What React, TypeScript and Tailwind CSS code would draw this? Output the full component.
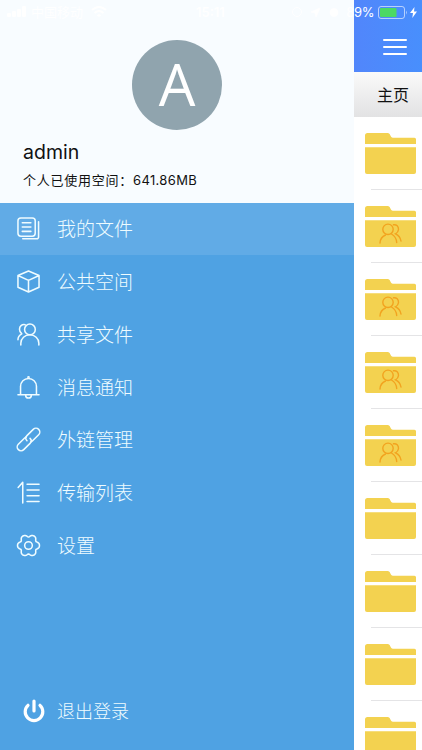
import type { ReactNode } from 'react';

const FONT = "font-['Inter','Noto_Sans_CJK_SC',sans-serif]";

// six soft lobes around the centre of a 24px box
const gearPoints = Array.from({ length: 90 }, (_, i) => {
  const a = (i / 90) * Math.PI * 2;
  const r = 10.4 + 1.3 * Math.cos(6 * a) - 0.25 * Math.cos(12 * a);
  return `${(12 + r * Math.cos(a)).toFixed(2)},${(12 + r * Math.sin(a)).toFixed(2)}`;
}).join(' ');

function MenuIcon({ children }: { children: ReactNode }) {
  return (
    <svg
      className="w-[23px] h-[23px] shrink-0 overflow-visible"
      viewBox="0 0 24 24"
      fill="none"
      stroke="currentColor"
      strokeWidth="1.6"
      strokeLinecap="round"
      strokeLinejoin="round"
    >
      {children}
    </svg>
  );
}

const menu: { label: string; icon: ReactNode }[] = [
  {
    label: '我的文件',
    icon: (
      <>
        <rect x="1" y="1" width="18" height="19" rx="3" />
        <path d="M5.5 6h9M5.5 10.5h9M5.5 15h9M22.5 5v15.5a2 2 0 0 1-2 2.3H6" />
      </>
    ),
  },
  {
    label: '公共空间',
    icon: <path d="M12 1 23 5.8V18L12 23 1 18V5.8ZM1 5.8l11 5 11-5M12 10.8V23" />,
  },
  {
    label: '共享文件',
    icon: (
      <>
        <circle cx="13.5" cy="6.7" r="5.6" />
        <path d="M4 23v-2a9.4 8.7 0 0 1 18.8 0v2M8.5 1.8C5 1 2.6 3.7 2.6 6.500c0 2 .9 3.700 2.300 4.700M5 11.300C2.300 12.700 1 15 1 17.500" />
      </>
    ),
  },
  {
    label: '消息通知',
    icon: (
      <>
        <path d="M1 19.500h22M3.700 19.500v-8.700a8.300 8.300 0 0 1 16.600 0v8.700M9 20c0 4 6 4 6 0" />
        <circle cx="12" cy="1.300" r=".6" />
      </>
    ),
  },
  {
    label: '外链管理',
    icon: (
      <g transform="rotate(-45 12 12)">
        <path d="M14 12.300c0 2.200-1.700 3.700-3.700 3.700H1a4 4 0 0 1 0-8h9.300q1.200 0 2 .5" />
        <path d="M10 11.700C10 9.500 11.700 8 13.700 8H23a4 4 0 0 1 0 8h-9.300q-1.200 0-2-.5" />
      </g>
    ),
  },
  {
    label: '传输列表',
    icon: <path d="M1.200 6.800 6 1.300V23M10.500 3.500H23M10.500 9.500H23M10.500 15.500H23M10.500 21.300H23" />,
  },
  {
    label: '设置',
    icon: (
      <>
        <polygon points={gearPoints} />
        <circle cx="12" cy="12" r="4" />
      </>
    ),
  },
];

const folders = [false, true, true, true, true, false, false, false, false];

function Folder({ shared }: { shared: boolean }) {
  return (
    <svg className="w-[51px] h-[42px] block" viewBox="0 0 51 42" fill="#f3d250">
      <path d="M0 11V2.500A2.500 2.500 0 0 1 2.500 0H22.500C26 0 25 4.800 28 4.800H49A2 2 0 0 1 51 7v4Z" />
      <path d="M0 14.300h51V39a2 2 0 0 1-2 2H2a2 2 0 0 1-2-2Z" />
      {shared && (
        <g fill="none" stroke="#f2a31f" strokeWidth="1.400" strokeLinecap="round">
          <circle cx="23" cy="23.300" r="5.200" />
          <path d="M15 37c.2-3.800 2.500-6.700 5.500-8M26.500 28c3 1.800 5 4.800 5.200 8.500M28.500 18.800c3-.6 5.200 1.800 5 4.700-.2 2-1.300 3.500-3 4.300 3 1.400 5 4 5.500 7.200" />
        </g>
      )}
    </svg>
  );
}

function StatusBar() {
  return (
    <div className="absolute inset-x-0 top-0 h-6 text-white text-[13px] leading-6">
      <div className="absolute left-[7px] top-0 flex items-center">
        <svg className="w-5 h-3" viewBox="0 0 20 12" fill="currentColor">
          <rect y="7" width="4" height="4" rx="1" />
          <rect x="5" y="5" width="4" height="6" rx="1" />
          <rect x="10" y="3" width="4" height="8" rx="1" />
          <rect x="15" width="4" height="11" rx="1" />
        </svg>
        <span className="ml-1">中国移动</span>
        <svg className="ml-2 w-4 h-3" viewBox="0 0 16 12" fill="none" stroke="currentColor" strokeWidth="2">
          <path d="M1 4q7-6 14 0M3.500 7q4.500-4 9 0M6.500 10q1.500-1.500 3 0" />
        </svg>
      </div>
      <span className="absolute left-[196px] top-0 font-semibold">15:11</span>
      <div className="absolute right-[5px] top-0 flex items-center">
        <svg className="w-[52px] h-3 mr-1" viewBox="0 0 52 12" fill="none" stroke="currentColor">
          <circle cx="7" cy="6" r="4.500" />
          <path d="m21 6 9-4-4 9-1-4Z" fill="currentColor" />
          <circle cx="44" cy="6.500" r="4" fill="currentColor" />
        </svg>
        <span className="tracking-[-0.4px]">89%</span>
        <svg className="ml-1 w-[29px] h-[13px]" viewBox="0 0 29 13">
          <rect x=".5" y=".5" width="26" height="12" rx="2.500" fill="none" stroke="#fff" strokeOpacity=".6" />
          <rect x="2" y="2" width="16.500" height="9" rx="1" fill="#4cd964" />
          <path d="M28 4.500q1.500 2 0 4Z" fill="#fff" fillOpacity=".6" />
        </svg>
        <svg className="ml-[3px] w-[7px] h-[11px]" viewBox="0 0 7 11" fill="currentColor">
          <path d="M4.500 0 0 6h3L2.300 11 7 4.500H4Z" />
        </svg>
      </div>
    </div>
  );
}

export default function App() {
  return (
    <div className={`relative w-[422px] h-[750px] overflow-hidden flex bg-white ${FONT}`}>
      <aside className="w-[354px] h-full shrink-0 flex flex-col bg-[#4fa2e3] text-[#effcff]">
        <header className="h-[202.500px] shrink-0 bg-[#f8fcff] text-[#111]">
          <div className="mt-[39.500px] ml-[132px] size-[90px] rounded-full bg-[#90a4ae] text-white flex items-center justify-center">
            <span className="font-['Open_Sans'] text-[58px] leading-none pb-px">A</span>
          </div>
          <div className="ml-[23px] mt-[8px] text-[19.500px] leading-7">admin</div>
          <div className="ml-[23px] mt-[4px] text-[13px] leading-5">
            <span className="tracking-[0.75px]">个人已使用空间：</span>
            <span className="tracking-[0.35px]">641.86MB</span>
          </div>
        </header>
        <nav className="font-light">
          {menu.map((item, i) => (
            <div
              key={item.label}
              className={`h-[52.750px] flex items-center pl-[17px] ${i === 0 ? 'bg-[#61abe6]' : ''}`}
            >
              <MenuIcon>{item.icon}</MenuIcon>
              <span className="ml-[17px] pt-[3px] text-[19px] leading-7">{item.label}</span>
            </div>
          ))}
        </nav>
        <div className="mt-auto mb-[24px] flex items-center pl-[23px] font-light">
          <svg className="w-[22px] h-6" viewBox="0 0 22 24" fill="none" stroke="#fff" strokeWidth="3.200" strokeLinecap="round">
            <path d="M11 2v10M5 6.300a8.800 8.800 0 1 0 12 0" />
          </svg>
          <span className="ml-3 pt-[2px] text-[18px] leading-7">退出登录</span>
        </div>
      </aside>

      <main className="flex-1 min-w-0">
        <div className="h-[72px] bg-linear-to-r from-[#5186fb] to-[#488ffd] pt-[39px] pl-[29px]">
          <div className="w-6 flex flex-col gap-[5px]">
            <i className="h-[2px] rounded bg-white" />
            <i className="h-[2px] rounded bg-white" />
            <i className="h-[2px] rounded bg-white" />
          </div>
        </div>
        <div className="h-[45px] pl-[23px] bg-linear-to-b from-[#fafafa] to-[#e2e2e3] text-[16px] leading-[47px] text-[#111] whitespace-nowrap">
          主页
        </div>
        {folders.map((shared, i) => (
          <div key={i} className="h-[73px] flex flex-col">
            <div className="pt-4 pl-[11px] flex-1">
              <Folder shared={shared} />
            </div>
            <div className="ml-[17px] h-px bg-[#e4e4e6]" />
          </div>
        ))}
      </main>
      <StatusBar />
    </div>
  );
}
